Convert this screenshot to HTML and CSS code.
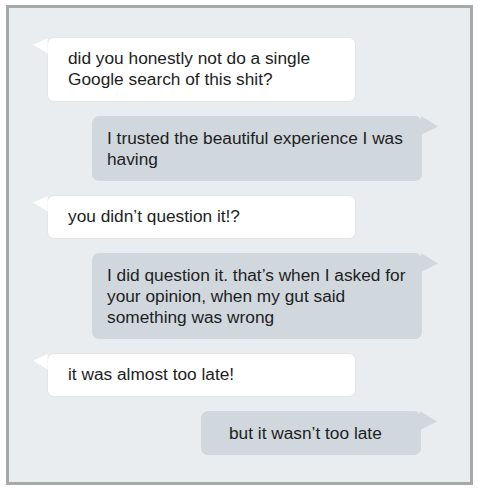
FILE: index.html
```html
<!DOCTYPE html>
<html>
<head>
<meta charset="utf-8">
<link rel="stylesheet" href="styles.css">
</head>
<body>
<div class="frame">
  <div class="msg in">
    <svg class="tail" width="16" height="18" viewBox="0 0 16 18"><polygon points="16,0.5 0,7.5 16,17"/></svg>
    did you honestly not do a single<br>Google search of this shit?
  </div>
  <div class="msg out">
    <svg class="tail" width="18" height="20" viewBox="0 0 18 20"><polygon points="0,0 17,10.5 0,19"/></svg>
    I trusted the beautiful experience I was<br>having
  </div>
  <div class="msg in">
    <svg class="tail" width="16" height="18" viewBox="0 0 16 18"><polygon points="16,0.5 0,7.5 16,17"/></svg>
    you didn’t question it!?
  </div>
  <div class="msg out">
    <svg class="tail" width="18" height="20" viewBox="0 0 18 20"><polygon points="0,0 17,10.5 0,19"/></svg>
    I did question it. that’s when I asked for<br>your opinion, when my gut said<br>something was wrong
  </div>
  <div class="msg in">
    <svg class="tail" width="16" height="18" viewBox="0 0 16 18"><polygon points="16,0.5 0,7.5 16,17"/></svg>
    it was almost too late!
  </div>
  <div class="msg out short">
    <svg class="tail" width="18" height="20" viewBox="0 0 18 20"><polygon points="0,0 17,10.5 0,19"/></svg>
    but it wasn’t too late
  </div>
</div>
</body>
</html>
```
FILE: styles.css
```css
html, body {
  margin: 0;
  padding: 0;
  background: #ffffff;
}
body {
  padding: 5px 0 0 6px;
  font-family: "Liberation Sans", Arial, sans-serif;
}
.frame {
  box-sizing: border-box;
  width: 467px;
  height: 480px;
  border: 3px solid #a6a9a8;
  background: #e9edf0;
  padding: 29px 0 0 0;
  display: flex;
  flex-direction: column;
  gap: 14px;
}
.msg {
  position: relative;
  box-sizing: border-box;
  font-size: 17.3px;
  line-height: 21px;
  color: #1e1e1e;
  border-radius: 7px;
}
.msg.in {
  background: #ffffff;
  margin-left: 38px;
  width: 309px;
  border: 1px solid #e2e6e9;
  padding: 10px 10px 11px 20px;
}
.msg.out {
  background: #d0d8de;
  margin-left: 83px;
  width: 330px;
  padding: 12px 10px 11px 15px;
}
.msg.out.short {
  margin-left: 192px;
  width: 220px;
  padding-left: 28px;
}
.tail {
  position: absolute;
  top: -1px;
  display: block;
}
.in .tail {
  left: -16px;
  fill: #ffffff;
  stroke: #e2e6e9;
  stroke-width: 0.6;
}
.out .tail {
  right: -17px;
  top: 0;
  fill: #d0d8de;
}
```
